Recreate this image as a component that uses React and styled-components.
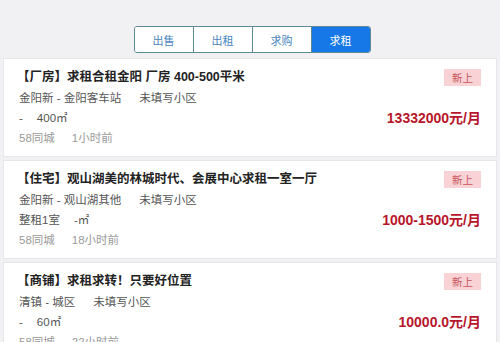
import styled, { createGlobalStyle } from "styled-components";

const GlobalStyle = createGlobalStyle`
  html, body {
    margin: 0;
    padding: 0;
    background: #f1f1f3;
    font-family: "Liberation Sans", "Noto Sans CJK SC", sans-serif;
  }
`;

const tabs = ["出售", "出租", "求购", "求租"];

const items = [
  {
    title: "【厂房】求租合租金阳 厂房 400-500平米",
    area: "金阳新 - 金阳客车站",
    community: "未填写小区",
    spec: ["-", "400㎡"],
    source: "58同城",
    time: "1小时前",
    price: "13332000元/月",
  },
  {
    title: "【住宅】观山湖美的林城时代、会展中心求租一室一厅",
    area: "金阳新 - 观山湖其他",
    community: "未填写小区",
    spec: ["整租1室", "-㎡"],
    source: "58同城",
    time: "18小时前",
    price: "1000-1500元/月",
  },
  {
    title: "【商铺】求租求转！只要好位置",
    area: "清镇 - 城区",
    community: "未填写小区",
    spec: ["-", "60㎡"],
    source: "58同城",
    time: "22小时前",
    price: "10000.0元/月",
  },
];

export default function App() {
  return (
    <>
      <GlobalStyle />
      <Page>
        <TopBar>
          <TabGroup>
            {tabs.map((t, i) => (
              <Tab key={t} $active={i === 3}>
                {t}
              </Tab>
            ))}
          </TabGroup>
        </TopBar>
        <List>
          {items.map((it) => (
            <Card key={it.title}>
              <Info>
                <Title>{it.title}</Title>
                <Line>
                  <span>{it.area}</span>
                  <Spaced $gap={18}>{it.community}</Spaced>
                </Line>
                <Line>
                  <span>{it.spec[0]}</span>
                  <Spaced $gap={14}>{it.spec[1]}</Spaced>
                </Line>
                <Meta>
                  <span>{it.source}</span>
                  <Spaced $gap={17}>{it.time}</Spaced>
                </Meta>
              </Info>
              <Side>
                <Badge>新上</Badge>
                <Price>{it.price}</Price>
              </Side>
            </Card>
          ))}
        </List>
      </Page>
    </>
  );
}

const Page = styled.div`
  width: 500px;
  height: 342px;
  overflow: hidden;
`;

const TopBar = styled.div`
  height: 58px;
  display: flex;
  justify-content: center;
  align-items: flex-start;
  padding: 26px 0 0 4px;
  box-sizing: border-box;
`;

const TabGroup = styled.div`
  display: flex;
  border: 1px solid #5d8a94;
  border-radius: 3px;
  overflow: hidden;
  background: #fff;
`;

const Tab = styled.div`
  width: 58px;
  height: 25px;
  display: flex;
  align-items: center;
  justify-content: center;
  font-size: 11px;
  color: ${(p) => (p.$active ? "#fff" : "#4a86c0")};
  background: ${(p) => (p.$active ? "#1677e6" : "#fff")};
  & + & {
    border-left: 1px solid #5d8a94;
  }
`;

const List = styled.div`
  display: flex;
  flex-direction: column;
  gap: 3px;
  padding: 0 3px;
`;

const Card = styled.div`
  display: flex;
  justify-content: space-between;
  background: #fff;
  border: 1px solid #e6e6e8;
  padding: 8px 15px 8px 13px;
  height: 99px;
  box-sizing: border-box;
`;

const Info = styled.div`
  display: flex;
  flex-direction: column;
`;

const Title = styled.div`
  font-size: 12.5px;
  font-weight: bold;
  line-height: 20px;
  color: #222;
  margin-bottom: 1px;
`;

const Line = styled.div`
  display: flex;
  font-size: 11.5px;
  line-height: 20px;
  color: #555;
  padding-left: 2px;
`;

const Meta = styled(Line)`
  color: #9a9a9a;
`;

const Spaced = styled.span`
  margin-left: ${(p) => p.$gap}px;
`;

const Side = styled.div`
  display: flex;
  flex-direction: column;
  align-items: flex-end;
  padding-top: 2px;
`;

const Badge = styled.div`
  width: 37px;
  height: 17px;
  display: flex;
  align-items: center;
  justify-content: center;
  background: #f9d2d5;
  color: #c8545b;
  font-size: 10.5px;
`;

const Price = styled.div`
  margin-top: 22px;
  font-size: 14px;
  font-weight: bold;
  line-height: 20px;
  color: #b8162b;
`;
